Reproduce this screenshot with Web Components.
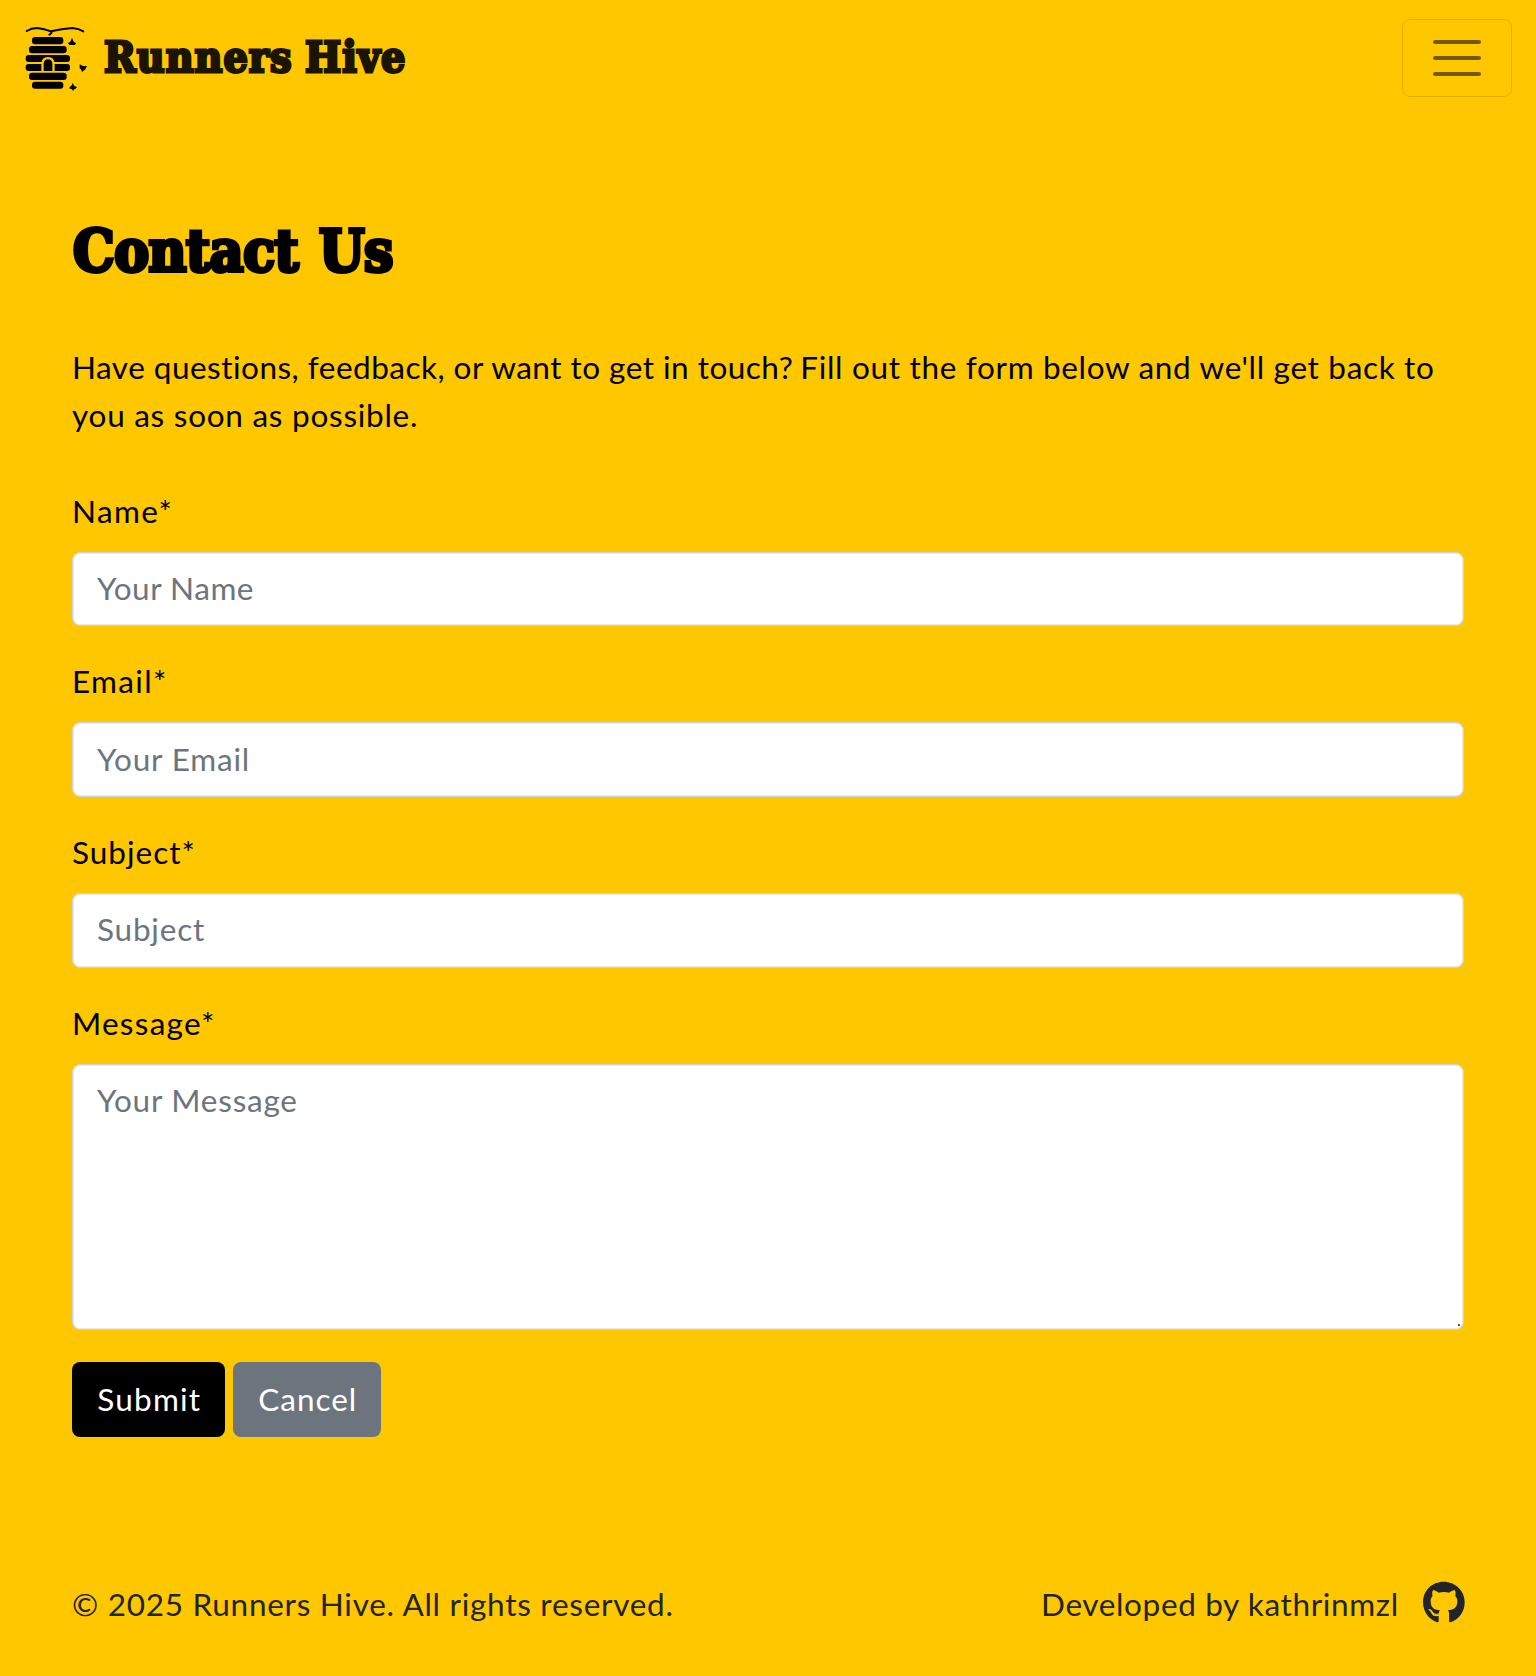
<!DOCTYPE html>
<html lang="en">
<head>
<meta charset="utf-8">
<title>Runners Hive</title>
<style>
  html { background: #ffc700; }
  body { margin: 0; font: 31.5px/46px Lato, "Open Sans", sans-serif; color: #000; }
</style>
</head>
<body>
<contact-page></contact-page>
<script>
  const BODY = '31.5px Lato';
  const SLAB = '"DejaVu Serif Condensed", "DejaVu Serif"';
  const ctx = document.createElement('canvas').getContext('2d');

  // Letter spacing that makes the text run exactly `width` pixels wide.
  function tracking(text, font, width, wordGap = 0) {
    ctx.font = font;
    const m = ctx.measureText(text);
    const ink = m.actualBoundingBoxLeft + m.actualBoundingBoxRight;
    const spaces = text.split(' ').length - 1;
    return ((width - ink - wordGap * spaces) / (text.length - 1)).toFixed(3) + 'px';
  }

  class BaseElement extends HTMLElement {
    connectedCallback() {
      if (this.shadowRoot) return;
      this.attachShadow({ mode: 'open' }).innerHTML = this.render();
    }
  }

  // Text set to a given measure.
  customElements.define('set-text', class extends BaseElement {
    render() {
      const text = this.textContent.trim();
      return `<style>:host{display:block;white-space:nowrap;letter-spacing:${tracking(text, BODY, +this.getAttribute('width'))}}:host([inline]){display:inline-block}</style><slot></slot>`;
    }
  });

  customElements.define('slab-text', class extends BaseElement {
    render() {
      const text = this.textContent.trim();
      const size = this.getAttribute('size');
      const gap = +this.getAttribute('gap') || 0;
      const ls = tracking(text, `bold ${size}px "DejaVu Serif Condensed"`, +this.getAttribute('width'), gap);
      return `<style>:host{display:block;white-space:nowrap;font:bold ${size}px/1.2 ${SLAB};word-spacing:${gap}px;letter-spacing:${ls};-webkit-text-stroke:${size / 15}px currentColor}</style><slot></slot>`;
    }
  });

  customElements.define('hive-logo', class extends BaseElement {
    render() {
      return `<style>:host{display:block;width:70px;height:70px}svg{display:block;filter:blur(.5px)}</style>
      <svg width="70" height="70" viewBox="42 24 210 210">
        <path d="M50 48Q64 39 81 39Q103 42 123 49Q155 42 187 39Q207 41 220 49M125 49L124 54L118 59" fill="none" stroke="#000" stroke-width="6" stroke-linecap="round"/>
        <rect x="66" y="66" width="94" height="22" rx="9"/>
        <rect x="57" y="93" width="113" height="22" rx="9"/>
        <rect x="47" y="120" width="133" height="21" rx="9"/>
        <rect x="47" y="147" width="133" height="21" rx="9"/>
        <rect x="57" y="173" width="113" height="22" rx="9"/>
        <rect x="66" y="200" width="94" height="21" rx="9"/>
        <path d="M94 170V148Q94 126 114 126Q134 126 134 148V170Z" fill="#ffc700"/>
        <path d="M101 168V148Q101 133 114 133Q127 133 127 148V168Z"/>
        <path d="M186 69L191 80L198 84L195 90H178L174 84L181 80Z"/>
        <path d="M209 148L219 153L231 153L226 163L216 171L213 163L209 160Z"/>
        <path d="M188 204L193 213L201 216L196 222L192 223L189 228L186 223L179 221V215L184 213Z"/>
      </svg>`;
    }
  });

  customElements.define('nav-toggler', class extends BaseElement {
    render() {
      return `<style>:host{display:block}button{display:block;margin:0;padding:8px 24px;width:110.5px;height:78.5px;box-sizing:border-box;background:none;border:1px solid rgba(0,0,0,.12);border-radius:8px}svg{display:block}</style>
      <button type="button" aria-label="Toggle navigation"><svg width="60" height="60" viewBox="0 0 30 30"><path stroke="rgba(0,0,0,.55)" stroke-linecap="round" stroke-width="2" d="M4 7h22M4 15h22M4 23h22"/></svg></button>`;
    }
  });

  customElements.define('site-nav', class extends BaseElement {
    render() {
      return `<style>:host{display:flex;align-items:center;justify-content:space-between;height:116px;padding:0 24px;box-sizing:border-box}.brand{display:flex;align-items:center;gap:10px;color:#1a1400}slab-text{padding-bottom:2px}</style>
      <div class="brand"><hive-logo></hive-logo><slab-text size="42.5" width="299" gap="-2">Runners Hive</slab-text></div>
      <nav-toggler></nav-toggler>`;
    }
  });

  customElements.define('form-field', class extends BaseElement {
    render() {
      const a = n => this.getAttribute(n);
      const ph = a('placeholder');
      const ls = tracking(ph, BODY, +a('ph-width'));
      const multi = this.hasAttribute('multiline');
      return `<style>
        :host{display:block;margin-bottom:32px}
        label{display:block;padding:0 0 2px;margin-bottom:16px}
        .box{position:relative}
        .control{display:block;width:100%;box-sizing:border-box;margin:0;height:74.66px;padding:11px 24px 13px;border:1.3px solid #ced4da;border-radius:8px;background:#fff;font:31.5px/46px Lato,sans-serif;letter-spacing:${ls};outline:0;resize:none;overflow:hidden;box-shadow:inset 0 0 0 .5px #ced4da}
        textarea.control{height:266.66px;line-height:48px}
        .control::placeholder{color:#6c757d;opacity:1}
        .grip{position:absolute;right:4px;bottom:4px;width:2px;height:2px;background:#555}
      </style>
      <label><set-text width="${a('label-width')}">${a('label')}</set-text></label>
      <div class="box">${multi
        ? `<textarea class="control" placeholder="${ph}"></textarea><span class="grip"></span>`
        : `<input class="control" type="text" placeholder="${ph}">`}</div>`;
    }
  });

  customElements.define('form-button', class extends BaseElement {
    render() {
      return `<style>:host{display:block}button{display:block;margin:0;width:${this.getAttribute('box')}px;height:74.66px;padding:0 0 2px;border:0;border-radius:8px;background:${this.getAttribute('color')};color:#fff;font:inherit}set-text{margin-left:25.3px;text-align:left}</style>
      <button type="button"><set-text width="${this.getAttribute('width')}">${this.textContent}</set-text></button>`;
    }
  });

  customElements.define('github-icon', class extends BaseElement {
    render() {
      return `<style>:host,svg{display:block}</style>
      <svg width="41.7" height="43" viewBox="0 0 496 512" fill="#212529"><path d="M165.9 397.4c0 2-2.3 3.6-5.2 3.6-3.3.3-5.6-1.3-5.6-3.6 0-2 2.3-3.6 5.2-3.6 3-.3 5.6 1.3 5.6 3.6zm-31.1-4.5c-.7 2 1.3 4.3 4.3 4.9 2.6 1 5.6 0 6.2-2s-1.3-4.3-4.3-5.2c-2.6-.7-5.5.3-6.2 2.3zm44.2-1.7c-2.9.7-4.9 2.6-4.6 4.9.3 2 2.9 3.3 5.9 2.6 2.9-.7 4.9-2.6 4.6-4.6-.3-1.9-3-3.2-5.9-2.9zM244.8 8C106.1 8 0 113.3 0 252c0 110.9 69.8 205.8 169.5 239.2 12.8 2.3 17.3-5.6 17.3-12.1 0-6.2-.3-40.4-.3-61.4 0 0-70 15-84.7-29.8 0 0-11.4-29.1-27.8-36.6 0 0-22.9-15.7 1.6-15.4 0 0 24.9 2 38.6 25.8 21.9 38.6 58.6 27.5 72.9 20.9 2.3-16 8.8-27.1 16-33.7-55.9-6.2-112.3-14.3-112.3-110.5 0-27.5 7.6-41.3 23.6-58.9-2.6-6.5-11.1-33.3 2.6-67.9 20.9-6.5 69 27 69 27 20-5.6 41.5-8.5 62.8-8.5s42.8 2.9 62.8 8.5c0 0 48.1-33.6 69-27 13.7 34.7 5.2 61.4 2.6 67.9 16 17.7 25.8 31.5 25.8 58.9 0 96.5-58.9 104.2-114.8 110.5 9.2 7.9 17 22.9 17 46.4 0 33.7-.3 75.4-.3 83.6 0 6.5 4.6 14.4 17.3 12.1C428.2 457.8 496 362.9 496 252 496 113.3 383.5 8 244.8 8z"/><path fill="none" stroke="#ffc700" stroke-width="7" stroke-linecap="round" d="M80 340l14 8M99 357l8 11M112 376l8 9M137 393l8 2M158 398l7-1M178 395l6-2"/></svg>`;
    }
  });

  customElements.define('site-footer', class extends BaseElement {
    render() {
      return `<style>:host{display:flex;justify-content:space-between;align-items:flex-start;color:#212529}.dev{display:flex;width:424px;margin-right:-1px;justify-content:space-between}</style>
      <set-text width="599.5">© 2025 Runners Hive. All rights reserved.</set-text>
      <div class="dev"><set-text width="354.5">Developed by kathrinmzl</set-text><github-icon></github-icon></div>`;
    }
  });

  customElements.define('contact-page', class extends BaseElement {
    render() {
      return `<style>
        :host{display:block}
        main{padding:0 72px}
        h1{margin:0;padding:101px 0 0 1px;height:126px;font-size:inherit}
        p{margin:0 0 48.6px;line-height:48px;white-space:nowrap;word-spacing:-1px}
        p set-text{word-spacing:0}
        .actions{display:flex;gap:8px;margin-bottom:144px}
      </style>
      <site-nav></site-nav>
      <main>
        <h1><slab-text size="58" width="317" gap="3">Contact Us</slab-text></h1>
        <p><set-text inline width="719.5">Have questions, feedback, or want to get in touch?</set-text> <set-text inline width="632">Fill out the form below and we'll get back to</set-text> <set-text width="344">you as soon as possible.</set-text></p>
        <form-field label="Name*" label-width="96.5" placeholder="Your Name" ph-width="156.5"></form-field>
        <form-field label="Email*" label-width="91" placeholder="Your Email" ph-width="151.5"></form-field>
        <form-field label="Subject*" label-width="120.5" placeholder="Subject" ph-width="106"></form-field>
        <form-field label="Message*" label-width="139" placeholder="Your Message" ph-width="200" multiline></form-field>
        <div class="actions"><form-button box="153" width="101.5" color="#000">Submit</form-button><form-button box="148.3" width="95.5" color="#6c757d">Cancel</form-button></div>
        <site-footer></site-footer>
      </main>`;
    }
  });
</script>
</body>
</html>
